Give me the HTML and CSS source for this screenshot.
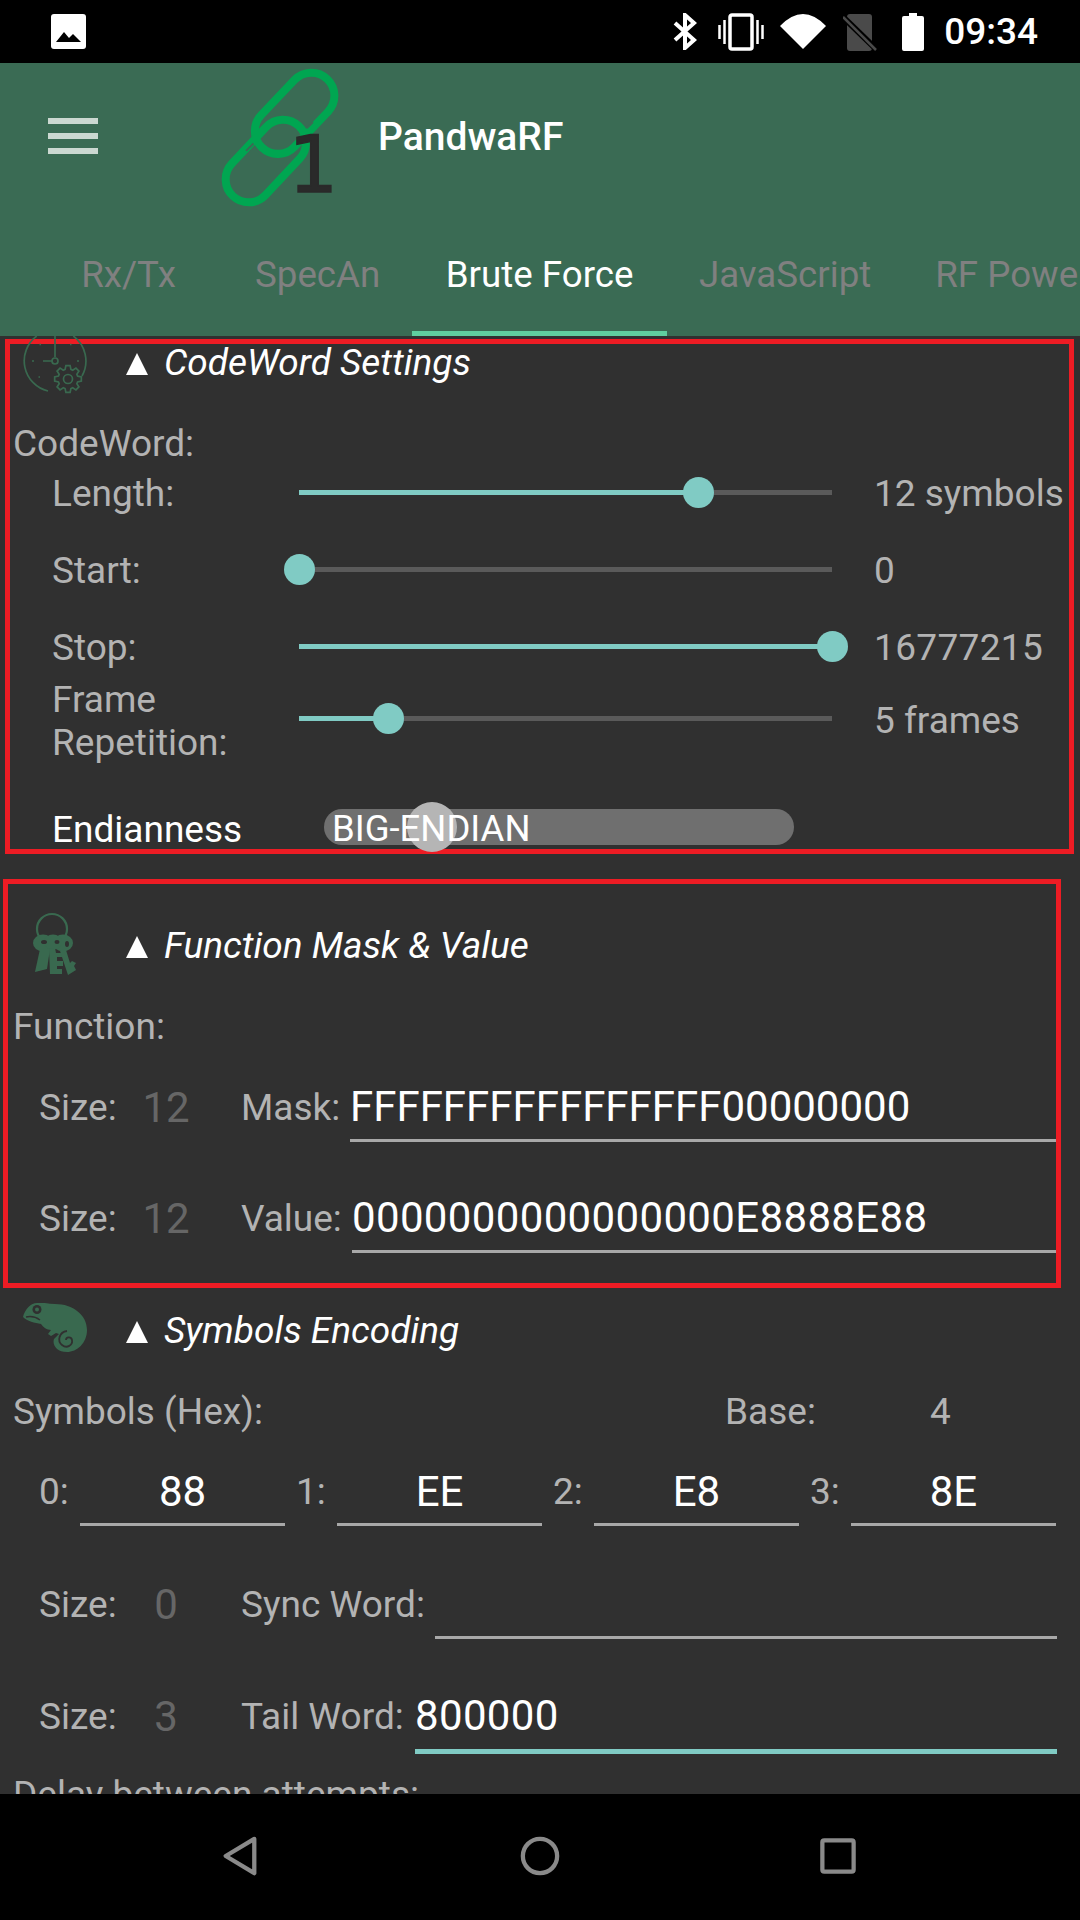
FILE: index.html
```html
<!DOCTYPE html>
<html lang="en">

<head>
    <meta charset="UTF-8">
    <meta name="viewport" content="width=device-width, initial-scale=1.0">
    <title>PandwaRF</title>
    <link rel="stylesheet" href="styles.css">
</head>

<body>
    <!-- status bar -->
    <div class="statusBar">
        <svg class="picIcon" viewBox="0 0 35 35"><path d="M3 0h29a3 3 0 0 1 3 3v29a3 3 0 0 1-3 3H3a3 3 0 0 1-3-3V3a3 3 0 0 1 3-3z" fill="#fff"/><path d="M5 28l8-10 5 6 4-4 8 8z" fill="#000"/></svg>
        <div class="statusRight">
            <svg class="btIcon" viewBox="0 0 24 37"><path d="M2 10l19 17-9 8V2l9 8L2 27" fill="none" stroke="#fff" stroke-width="4"/></svg>
            <svg class="vibIcon" viewBox="0 0 46 38"><rect x="12" y="2" width="22" height="34" rx="2" fill="none" stroke="#fff" stroke-width="3.5"/><path d="M1.500 12v14M6.500 7v24M39.500 7v24M44.500 12v14" stroke="#fff" stroke-width="2.500"/></svg>
            <svg class="wifiIcon" viewBox="0 0 46 35"><path d="M0 12Q23-12 46 12L23 35z" fill="#fff"/></svg>
            <svg class="simIcon" viewBox="0 0 34 38"><path d="M7 1h19a3 3 0 0 1 3 3v31a3 3 0 0 1-3 3H7a3 3 0 0 1-3-3V4a3 3 0 0 1 3-3z" fill="#4a4a4a"/><path d="M1 5l32 31" stroke="#000" stroke-width="6"/><path d="M0 4l33 33" stroke="#4a4a4a" stroke-width="2.500"/></svg>
            <svg class="batIcon" viewBox="0 0 22 38"><path d="M7 0h8v3h5a2 2 0 0 1 2 2v31a2 2 0 0 1-2 2H2a2 2 0 0 1-2-2V5a2 2 0 0 1 2-2h5z" fill="#fff"/></svg>
            <span class="clock">09:34</span>
        </div>
    </div>

    <!-- toolbar and tabs -->
    <div class="toolbar">
        <div class="titleRow">
            <div class="burger"><i></i><i></i><i></i></div>
            <svg class="logo" viewBox="120 40 380 440">
                <rect x="208" y="118" width="283" height="138" rx="69" transform="rotate(-46.400 350 187.500)" fill="none" stroke="#00a651" stroke-width="24"/>
                <rect x="119" y="261" width="288" height="138" rx="69" transform="rotate(-46.900 263.500 330)" fill="none" stroke="#00a651" stroke-width="24"/>
                <path d="M204 300l22-22M386 232l18-18" stroke="#3a6b54" stroke-width="6"/>
                <text class="logoOne" x="405" y="422" text-anchor="middle">1</text>
            </svg>
            <span class="appTitle">PandwaRF</span>
        </div>
        <ul class="tabs">
            <li>Rx/Tx</li>
            <li>SpecAn</li>
            <li class="active">Brute Force</li>
            <li>JavaScript</li>
            <li>RF Power</li>
        </ul>
    </div>

    <div class="content">
        <!-- annotation boxes on top of the sections -->
        <div class="markBox markOne"></div>
        <div class="markBox markTwo"></div>

        <div class="head">
            <svg class="headIcon clockIcon" viewBox="0 0 64 58">
                <g fill="none" stroke="#39694f" stroke-width="1.700">
                    <path d="M13.700 0A31 31 0 0 0 25 55M50.300 0A31 31 0 0 1 59 40"/>
                    <path d="M32 0v21M20 25h9"/>
                    <circle cx="32" cy="25" r="3"/>
                    <path d="M9 25h2M54 25h2M16.500 8.500h1.500M47 8.500h1.500M15.500 41h1.500"/>
                    <circle cx="45" cy="43" r="4.500"/>
                    <polygon transform="translate(45 43)" points="9.560,-2.920 13.330,-2.110 13.330,2.110 9.560,2.920 8.830,4.690 10.920,7.930 7.930,10.920 4.690,8.830 2.920,9.560 2.110,13.330 -2.110,13.330 -2.920,9.560 -4.690,8.830 -7.930,10.920 -10.920,7.930 -8.830,4.690 -9.560,2.920 -13.330,2.110 -13.330,-2.110 -9.560,-2.920 -8.830,-4.690 -10.920,-7.930 -7.930,-10.920 -4.690,-8.830 -2.920,-9.560 -2.110,-13.330 2.110,-13.330 2.920,-9.560 4.690,-8.830 7.930,-10.920 10.920,-7.930 8.830,-4.690"/>
                </g>
            </svg>
            <span class="tri"></span>
            <span class="headText">CodeWord Settings</span>
        </div>
        <div class="row groupLabel firstLabel">CodeWord:</div>
        <div class="sliderRow">
            <span class="sliderLabel">Length:</span>
            <div class="slider"><div class="sliderFill" style="width: 74.900%"><i></i></div></div>
            <span class="sliderValue">12 symbols</span>
        </div>
        <div class="sliderRow gapRow">
            <span class="sliderLabel">Start:</span>
            <div class="slider"><div class="sliderFill" style="width: 0%"><i></i></div></div>
            <span class="sliderValue">0</span>
        </div>
        <div class="sliderRow gapRow">
            <span class="sliderLabel">Stop:</span>
            <div class="slider"><div class="sliderFill" style="width: 100%"><i></i></div></div>
            <span class="sliderValue digits">16777215</span>
        </div>
        <div class="sliderRow frameRow">
            <span class="sliderLabel">Frame<br>Repetition:</span>
            <div class="slider"><div class="sliderFill" style="width: 16.700%"><i></i></div></div>
            <span class="sliderValue">5 frames</span>
        </div>
        <div class="endianRow">
            <span class="endianLabel">Endianness</span>
            <div class="switch"><span class="switchText">BIG-ENDIAN</span><i></i></div>
        </div>

        <div class="head headTwo">
            <svg class="headIcon keysIcon" viewBox="0 0 46 64">
                <circle cx="22" cy="17" r="15" fill="none" stroke="#39694f" stroke-width="2.200"/>
                <ellipse cx="13" cy="31" rx="10" ry="8.500" fill="#39694f"/>
                <ellipse cx="33" cy="31" rx="10" ry="8.500" fill="#39694f"/>
                <ellipse cx="23" cy="30" rx="9" ry="7.500" fill="#39694f"/>
                <ellipse cx="14" cy="30" rx="3" ry="2" fill="#303030"/>
                <ellipse cx="27" cy="30" rx="2.500" ry="2" fill="#303030"/>
                <ellipse cx="37" cy="32" rx="2" ry="3" fill="#303030"/>
                <path d="M10 37L5 60l12-3 3-20z" fill="#39694f"/>
                <path d="M19 37l1 25h12v-5h-5v-3h6v-5h-6v-4h5v-4h-6l-1-5z" fill="#39694f"/>
                <path d="M30 39l8 24 8-5-2-4 2-3-4-2-2 2-4-13z" fill="#39694f"/>
            </svg>
            <span class="tri"></span>
            <span class="headText">Function Mask &amp; Value</span>
        </div>
        <div class="row groupLabel firstLabel">Function:</div>
        <div class="fieldRow maskRow">
            <span class="sizeLabel">Size:</span>
            <span class="sizeNum">12</span>
            <span class="fieldLabel maskLabel">Mask:</span>
            <div class="field">FFFFFFFFFFFFFFFF00000000</div>
        </div>
        <div class="fieldRow tallGap">
            <span class="sizeLabel">Size:</span>
            <span class="sizeNum">12</span>
            <span class="fieldLabel valueLabel">Value:</span>
            <div class="field digits">0000000000000000E8888E88</div>
        </div>

        <div class="head headThree">
            <svg class="headIcon chamIcon" viewBox="0 0 64 52">
                <path d="M0 14C2 6 8 0 14 0c6-1 12 1 18 1 18 0 32 11 32 26 0 13-10 22-20 22-10 0-15-7-13-13l5-5-3-1-5 3-3-2 3-4c-4 0-8-3-10-6C12 20 4 18 0 14z" fill="#39694f"/>
                <circle cx="14" cy="6.500" r="4.500" fill="#303030"/>
                <circle cx="14" cy="6.500" r="2" fill="#39694f"/>
                <path d="M3 14c5-1 10 0 14 3" fill="none" stroke="#303030" stroke-width="1.500"/>
                <path d="M44 28c-8 1-10 10-5 14 5 4 11 0 10-5-1-4-6-3-6 0" fill="none" stroke="#303030" stroke-width="1.800"/>
            </svg>
            <span class="tri"></span>
            <span class="headText">Symbols Encoding</span>
        </div>
        <div class="row symHead">
            <span class="symTitle">Symbols (Hex):</span>
            <span class="baseLabel">Base:</span>
            <span>4</span>
        </div>
        <div class="symRow">
            <div class="sym"><span class="symLabel">0:</span><div class="field symField">88</div></div>
            <div class="sym"><span class="symLabel">1:</span><div class="field symField">EE</div></div>
            <div class="sym"><span class="symLabel">2:</span><div class="field symField">E8</div></div>
            <div class="sym"><span class="symLabel">3:</span><div class="field symField">8E</div></div>
        </div>
        <div class="fieldRow syncRow">
            <span class="sizeLabel">Size:</span>
            <span class="sizeNum">0</span>
            <span class="fieldLabel syncLabel">Sync Word:</span>
            <div class="field"></div>
        </div>
        <div class="fieldRow tailRow">
            <span class="sizeLabel">Size:</span>
            <span class="sizeNum">3</span>
            <span class="fieldLabel tailLabel">Tail Word:</span>
            <div class="field focused digits">800000</div>
        </div>
        <div class="row groupLabel delayLabel">Delay between attempts:</div>
    </div>

    <!-- navigation bar -->
    <div class="navBar">
        <svg class="navIcon" viewBox="0 0 36 42"><path d="M33 3L3 21l30 18z" fill="none" stroke="#8a8a8a" stroke-width="4.500" stroke-linejoin="round"/></svg>
        <svg class="navIcon homeIcon" viewBox="0 0 42 42"><circle cx="21" cy="21" r="18" fill="none" stroke="#8a8a8a" stroke-width="4.500"/></svg>
        <svg class="navIcon" viewBox="0 0 38 38"><rect x="2.500" y="2.500" width="33" height="33" rx="2" fill="none" stroke="#8a8a8a" stroke-width="4.500"/></svg>
    </div>
</body>

</html>
```

FILE: styles.css
```css
* {
    padding: 0;
    margin: 0;
    box-sizing: border-box;
    list-style: none;
}

body {
    width: 1080px;
    height: 1920px;
    display: flex;
    flex-direction: column;
    overflow: hidden;
    background-color: #303030;
    font-family: Roboto, "Liberation Sans", sans-serif;
    font-size: 37px;
    color: #b3b3b3;
}

/* status bar */
.statusBar {
    height: 63px;
    background-color: #000;
    display: flex;
    align-items: center;
    justify-content: space-between;
    padding: 0 42px 0 51px;
}

.picIcon {
    width: 35px;
    height: 35px;
}

.statusRight {
    display: flex;
    align-items: center;
}

.btIcon {
    width: 24px;
    height: 37px;
    margin-right: 21px;
}

.vibIcon {
    width: 46px;
    height: 38px;
    margin-right: 16px;
}

.wifiIcon {
    width: 46px;
    height: 35px;
    margin-right: 17px;
}

.simIcon {
    width: 34px;
    height: 38px;
    margin-right: 25px;
}

.batIcon {
    width: 22px;
    height: 38px;
    margin-right: 20px;
}

.clock {
    color: #fff;
    font-size: 37px;
    font-weight: 500;
}

/* toolbar */
.toolbar {
    height: 273px;
    background-color: #3a6b54;
}

.titleRow {
    height: 148px;
    display: flex;
    align-items: center;
    padding-left: 48px;
}

.burger {
    width: 50px;
    display: flex;
    flex-direction: column;
    gap: 9px;
    margin-top: -2px;
}

.burger i {
    display: block;
    height: 6px;
    background-color: #cbd8d1;
}

.logo {
    width: 127px;
    height: 147px;
    margin-left: 120px;
}

.logoOne {
    font-family: "DejaVu Sans", sans-serif;
    font-size: 235px;
    fill: #2a2a2a;
    stroke: #2a2a2a;
    stroke-width: 4px;
}

.appTitle {
    margin-left: 33px;
    color: #fff;
    font-size: 39px;
    font-weight: 500;
}

.tabs {
    height: 100px;
    margin-top: 25px;
    display: flex;
    padding-left: 34px;
    overflow: hidden;
    font-size: 36.700px;
}

.tabs li {
    flex: none;
    min-width: 189px;
    height: 100px;
    padding: 0 32px 24px;
    display: flex;
    align-items: center;
    justify-content: center;
    color: #808080;
}

.tabs .active {
    color: #fff;
    border-bottom: 5px solid #5fcf9f;
    padding: 0 33.500px 19px;
}

/* content */
.content {
    position: relative;
    flex: 1;
    overflow: hidden;
}

.markBox {
    position: absolute;
    border: 5px solid #ed1c24;
}

.markOne {
    left: 5px;
    top: 3px;
    width: 1069px;
    height: 515px;
}

.markTwo {
    left: 3px;
    top: 543px;
    width: 1058px;
    height: 409px;
}

.head {
    height: 52px;
    display: flex;
    align-items: center;
    position: relative;
}

.headIcon {
    position: absolute;
}

.clockIcon {
    left: 23px;
    top: 0;
    width: 64px;
    height: 58px;
}

.keysIcon {
    left: 30px;
    top: -7px;
    width: 46px;
    height: 64px;
}

.chamIcon {
    left: 23px;
    top: -1px;
    width: 64px;
    height: 52px;
}

.tri {
    width: 0;
    height: 0;
    margin-left: 126px;
    border-left: 11px solid transparent;
    border-right: 11px solid transparent;
    border-bottom: 22px solid #fff;
    margin-top: 4px;
}

.headText {
    margin-left: 16px;
    color: #fff;
    font-style: italic;
}

.headTwo {
    margin-top: 65px;
}

.headThree {
    margin-top: 61px;
}

.row {
    height: 50px;
    display: flex;
    align-items: center;
}

.groupLabel {
    padding-left: 13px;
}

.firstLabel {
    margin-top: 30px;
}

.delayLabel {
    margin-top: 28px;
}

.digits {
    letter-spacing: 0.350px;
}

/* sliders */
.sliderRow {
    height: 50px;
    display: flex;
    align-items: center;
    padding-left: 52px;
}

.gapRow {
    margin-top: 27px;
}

.frameRow {
    height: 87px;
    margin-top: 5px;
}

.sliderLabel {
    width: 247px;
    line-height: 43px;
}

.slider {
    width: 533px;
    height: 5px;
    background-color: #5a5a5a;
    margin-top: -2px;
}

.frameRow .slider {
    margin-top: -4px;
}

.sliderFill {
    position: relative;
    height: 5px;
    background-color: #80cbc4;
}

.sliderFill i {
    position: absolute;
    right: -15.500px;
    top: -13px;
    width: 31px;
    height: 31px;
    border-radius: 50%;
    background-color: #80cbc4;
}

.sliderValue {
    margin-left: 42px;
    white-space: nowrap;
}

/* switch */
.endianRow {
    height: 50px;
    margin-top: 40px;
    display: flex;
    align-items: center;
    padding-left: 52px;
}

.endianLabel {
    width: 272px;
    color: #fff;
}

.switch {
    position: relative;
    width: 470px;
    height: 36px;
    margin-top: -4px;
    padding-left: 8px;
    border-radius: 18px;
    background-color: #6f6f6f;
    color: #fff;
    font-size: 36.500px;
    line-height: 40px;
}

.switch i {
    position: absolute;
    left: 83px;
    top: -7px;
    width: 50px;
    height: 50px;
    border-radius: 50%;
    background-color: #b5b5b5;
}

.switchText {
    position: relative;
    z-index: 1;
}

/* text fields */
.fieldRow {
    height: 50px;
    display: flex;
    align-items: center;
    padding: 0 23px 0 39px;
}

.maskRow {
    margin-top: 31px;
}

.tallGap {
    margin-top: 61px;
}

.syncRow {
    margin-top: 63px;
}

.tailRow {
    margin-top: 62px;
}

.sizeLabel {
    width: 100px;
}

.sizeNum {
    width: 54px;
    text-align: center;
    color: #666;
    font-size: 42px;
}

.fieldLabel {
    margin-left: 48px;
    white-space: nowrap;
}

.maskLabel {
    width: 109px;
}

.valueLabel {
    width: 111px;
}

.syncLabel {
    width: 194px;
}

.tailLabel {
    width: 174px;
}

.field {
    flex: 1;
    align-self: flex-start;
    height: 60px;
    line-height: 50px;
    border-bottom: 3px solid #a8a8a8;
    color: #fff;
    font-size: 42px;
}

.focused {
    height: 63px;
    border-bottom: 5px solid #80cbc4;
}

/* symbols */
.symHead {
    margin-top: 30px;
    padding-left: 13px;
}

.symTitle {
    width: 712px;
}

.baseLabel {
    width: 205px;
}

.symRow {
    height: 50px;
    margin-top: 30px;
    display: flex;
    gap: 11px;
    padding-left: 39px;
}

.sym {
    display: flex;
    align-items: center;
}

.symLabel {
    width: 41px;
}

.symField {
    flex: none;
    width: 205px;
    text-align: center;
    line-height: 52px;
}

/* navigation bar */
.navBar {
    height: 126px;
    background-color: #000;
    display: flex;
    align-items: center;
    padding: 0 224px 2px 222px;
    justify-content: space-between;
}

.navIcon {
    height: 40px;
    width: 36px;
}

.homeIcon {
    width: 40px;
    margin-left: 2px;
}
```
